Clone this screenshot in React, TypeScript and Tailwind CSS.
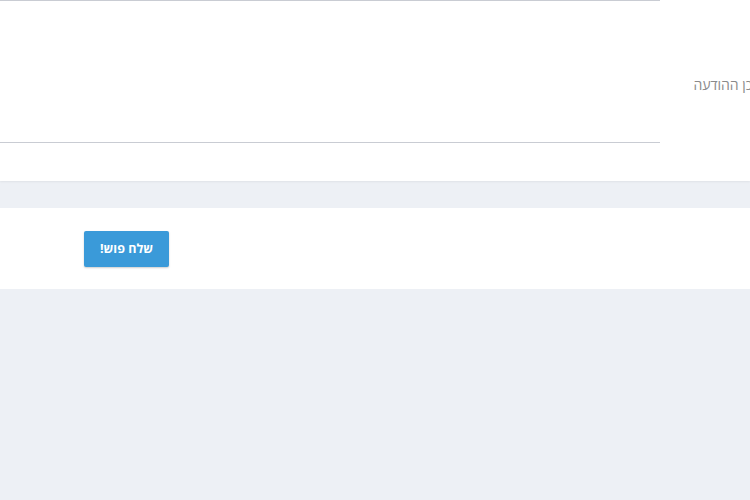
import React from "react";

export default function App() {
  return (
    <div
      className="w-[750px] h-[500px] overflow-hidden bg-[#edf0f5]"
      style={{ fontFamily: '"Open Sans", "Noto Sans", sans-serif' }}
    >
      <div className="h-[181px] bg-white shadow-[0_1px_2px_rgba(0,0,0,0.06)] overflow-hidden">
        <div dir="rtl" className="flex flex-row items-start">
          <div className="w-[90px] shrink-0 mr-[-15px] pt-[74px] text-[14px] text-[#8a8a8a] whitespace-nowrap">
            תוכן ההודעה
          </div>
          <div className="w-[15px] shrink-0" />
          <textarea
            className="block w-[670px] shrink-0 h-[143px] border-x-0 border-y border-[#c9ccd3] bg-white resize-none outline-none"
            defaultValue=""
          />
        </div>
      </div>
      <div className="mt-[27px] h-[81px] bg-white pt-[23px] pl-[84px]">
        <button
          dir="rtl"
          className="w-[85px] h-[36px] rounded-[2px] bg-[#3a9ad9] text-white text-[12.5px] font-bold shadow-[0_1px_2px_rgba(0,0,0,0.2)]"
        >
          שלח פוש!
        </button>
      </div>
    </div>
  );
}
